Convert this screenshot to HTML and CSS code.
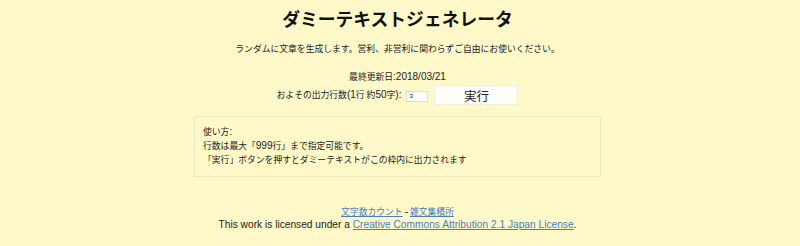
FILE: index.html
```html
<!DOCTYPE html>
<html lang="ja">
<head>
<meta charset="utf-8">
<title>ダミーテキストジェネレータ</title>
<link rel="stylesheet" href="styles.css">
</head>
<body>
<div class="page">
  <h1 class="title">ダミーテキストジェネレータ</h1>
  <p class="lead">ランダムに文章を生成します。営利、非営利に関わらずご自由にお使いください。</p>
  <p class="updated">最終更新日<span class="lat">:2018/03/21</span></p>
  <div class="form-row">
    <label class="label">およその出力行数<span class="lat">(1</span>行 約<span class="lat">50</span>字<span class="lat">):</span></label>
    <input class="lines" type="text" value="3">
    <button class="run">実行</button>
  </div>
  <div class="output">
    <div>使い方<span class="lat">:</span></div>
    <div>行数は最大「<span class="lat">999</span>行」まで指定可能です。</div>
    <div>「実行」ボタンを押すとダミーテキストがこの枠内に出力されます</div>
  </div>
  <div class="footer">
    <div><a href="#">文字数カウント</a> <span class="lat">-</span> <a href="#">雑文集積所</a></div>
    <div class="lat license">This work is licensed under a <a href="#">Creative Commons Attribution 2.1 Japan License</a>.</div>
  </div>
</div>
</body>
</html>
```

FILE: styles.css
```css
html, body {
  margin: 0;
  padding: 0;
  background: #fff8c9;
}
body {
  font-family: "Noto Sans CJK JP", "Liberation Sans", sans-serif;
  color: #222;
  font-size: 8.8px;
}
.lat {
  font-family: "Liberation Sans", "Noto Sans CJK JP", sans-serif;
  font-size: 10px;
}
.page {
  display: flex;
  flex-direction: column;
  align-items: center;
  padding-top: 3px;
  padding-right: 5px;
}
.title {
  margin: 0;
  font-size: 17.8px;
  font-weight: bold;
  line-height: 30px;
  color: #111;
}
.lead {
  margin: 9px 0 0;
  line-height: 14px;
}
.updated {
  margin: 14px 0 0;
  line-height: 14px;
}
.form-row {
  display: flex;
  align-items: center;
  gap: 5px;
  margin-top: 1px;
  height: 20px;
}
.label {
  line-height: 14px;
}
.lines {
  box-sizing: border-box;
  width: 22px;
  height: 11px;
  font-size: 6px;
  padding: 0 2px;
  border: 1px solid #ddd;
  background: #fff;
  font-family: "Liberation Sans", sans-serif;
  margin-top: 2px;
}
.run {
  width: 84px;
  height: 20px;
  margin-left: 1px;
  border: 1px solid #f3eed8;
  background: #fffefa;
  font-family: "Noto Sans CJK JP", sans-serif;
  font-size: 12.5px;
  color: #222;
  padding: 0;
}
.output {
  box-sizing: border-box;
  width: 407px;
  margin-top: 11px;
  padding: 8px 8px 9px;
  border: 1px solid #f1e9c0;
  line-height: 14px;
}
.footer {
  margin-top: 28px;
  text-align: center;
  line-height: 13px;
}
.license {
  font-size: 10.2px;
}
.footer a {
  color: #4a7fc1;
}
```
